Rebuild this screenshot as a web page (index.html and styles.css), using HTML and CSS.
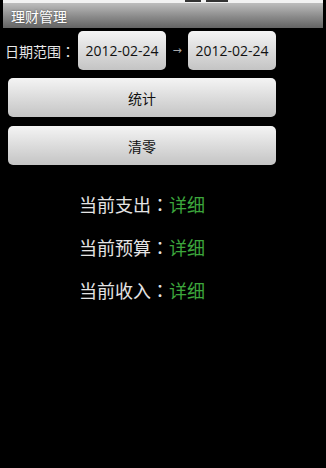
FILE: index.html
```html
<!DOCTYPE html>
<html>
<head>
<meta charset="utf-8">
<link rel="stylesheet" href="styles.css">
</head>
<body>
<div class="topstrip"><span class="mark m1"></span><span class="mark m2"></span></div>
<div class="titlebar">理财管理</div>
<div class="daterow">
  <span class="label">日期范围<span class="colon">：</span></span>
  <div class="btn date">2012-02-24</div>
  <span class="arrow">→</span>
  <div class="btn date">2012-02-24</div>
</div>
<div class="btn wide first">统计</div>
<div class="btn wide">清零</div>
<div class="info">
  <div class="row">当前支出<span class="colon">：</span><span class="link">详细</span></div>
  <div class="row">当前预算<span class="colon">：</span><span class="link">详细</span></div>
  <div class="row">当前收入<span class="colon">：</span><span class="link">详细</span></div>
</div>
</body>
</html>
```
FILE: styles.css
```css
html, body {
  margin: 0;
  padding: 0;
  background: #000;
  width: 326px;
  height: 468px;
  overflow: hidden;
  font-family: "Noto Sans CJK SC", "Open Sans", sans-serif;
}
.topstrip {
  margin: 0 3px;
  height: 3px;
  background: #f2f2f2;
  display: flex;
}
.mark {
  height: 2px;
  background: #333;
}
.m1 { margin-left: 182px; width: 16px; }
.m2 { margin-left: 5px; width: 22px; }
.titlebar {
  margin: 0 3px;
  height: 25px;
  background: linear-gradient(#bdbdbd, #8a8a8a 55%, #646464);
  color: #fff;
  font-size: 14px;
  line-height: 26px;
  padding-left: 8px;
  text-shadow: 0 0 2px #444;
}
.colon {
  font-family: "Noto Sans CJK TC", sans-serif;
}
.daterow {
  display: flex;
  align-items: center;
  margin-top: 3px;
  padding-left: 5px;
  height: 39px;
}
.label {
  color: #e8e8e8;
  font-size: 14px;
  width: 73px;
  white-space: nowrap;
}
.btn {
  background: linear-gradient(#f4f4f4, #dcdcdc 50%, #c4c4c4);
  border-radius: 5px;
  color: #111;
  display: flex;
  align-items: center;
  justify-content: center;
  box-sizing: border-box;
}
.date {
  width: 88px;
  height: 39px;
  font-family: "Open Sans", sans-serif;
  font-size: 14px;
}
.arrow {
  color: #aaa;
  font-family: "DejaVu Sans", sans-serif;
  font-size: 11px;
  width: 22px;
  text-align: center;
}
.wide {
  margin-left: 8px;
  width: 268px;
  height: 39px;
  font-size: 14px;
  margin-top: 9px;
}
.wide.first { margin-top: 8px; }
.info {
  margin-top: 26px;
  display: flex;
  flex-direction: column;
  align-items: center;
  padding-right: 42px;
}
.row {
  color: #e4e4e4;
  font-size: 18px;
  height: 43px;
  line-height: 27px;
}
.link { color: #3ca63c; }
```
